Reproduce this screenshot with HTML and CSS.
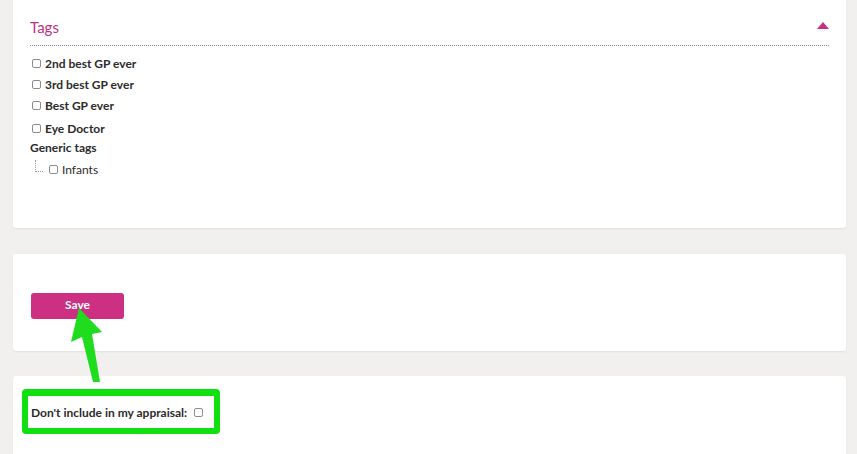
FILE: index.html
```html
<!DOCTYPE html>
<html>
<head>
<meta charset="utf-8">
<link rel="stylesheet" href="styles.css">
</head>
<body>
<div class="page">
  <section class="card card-tags">
    <div class="tags-head">
      <h2 class="tags-title">Tags</h2>
      <span class="caret"></span>
    </div>
    <ul class="tag-list">
      <li class="tag"><span class="cb"></span>2nd best GP ever</li>
      <li class="tag"><span class="cb"></span>3rd best GP ever</li>
      <li class="tag"><span class="cb"></span>Best GP ever</li>
      <li class="tag tag-last"><span class="cb"></span>Eye Doctor</li>
    </ul>
    <div class="group-title">Generic tags</div>
    <div class="sub-tag"><span class="tree"></span><span class="cb"></span>Infants</div>
  </section>

  <section class="card card-save">
    <button class="btn-save">Save</button>
  </section>

  <section class="card card-appraisal">
    <div class="highlight">
      <span class="label">Don't include in my appraisal:</span><span class="cb"></span>
    </div>
  </section>

  <svg class="arrow" width="60" height="90" viewBox="0 0 60 90">
    <polygon points="19,0 11,34 22,29 33,74 40,74 32,26 42,24" fill="#1fdc1f"/>
  </svg>
</div>
</body>
</html>
```

FILE: styles.css
```css
* { box-sizing: border-box; }
html, body { margin: 0; padding: 0; }
body {
  background: #f1f0ee;
  font-family: Lato, "Open Sans", Arial, sans-serif;
  color: #2b2b2b;
  width: 857px;
  height: 454px;
  overflow: hidden;
}
.page {
  position: relative;
  padding: 0 11px 0 13px;
}
.card {
  background: #fff;
  border-radius: 3px;
  box-shadow: 0 1px 2px rgba(0,0,0,0.07);
}
.card-tags {
  margin-top: -6px;
  height: 234px;
  padding: 0 17px;
}
.tags-head {
  display: flex;
  justify-content: space-between;
  align-items: center;
  padding-top: 24px;
  padding-bottom: 9px;
  border-bottom: 1px dotted #8a8a8a;
}
.tags-title {
  margin: 0;
  font-size: 15px;
  line-height: 18px;
  font-weight: 400;
  color: #c2307f;
}
.caret {
  width: 0; height: 0;
  border-left: 6px solid transparent;
  border-right: 6px solid transparent;
  border-bottom: 7px solid #c92f84;
  margin-top: -3px;
}
.tag-list {
  list-style: none;
  margin: 7px 0 0 0;
  padding: 0;
}
.tag {
  display: flex;
  align-items: center;
  height: 21px;
  font-size: 12px;
  font-weight: 700;
  padding-left: 2px;
}
.tag-last { height: 23px; padding-top: 2px; }
.cb {
  display: inline-block;
  flex: none;
  width: 9px;
  height: 9px;
  border: 1px solid #8c8c8c;
  border-radius: 2px;
  margin-right: 4px;
  background: #fff;
}
.group-title {
  font-size: 12px;
  font-weight: 700;
  line-height: 16px;
  margin-top: 1px;
}
.sub-tag {
  display: flex;
  align-items: center;
  height: 20px;
  margin-top: 3px;
  font-size: 12px;
  padding-left: 5px;
}
.tree {
  width: 8px;
  height: 12px;
  border-left: 1px dotted #999;
  border-bottom: 1px dotted #999;
  margin-right: 6px;
  margin-top: -6px;
}
.card-save {
  margin-top: 26px;
  height: 97px;
  padding: 39px 17px 0;
}
.btn-save {
  display: block;
  margin-left: 1px;
  width: 93px;
  height: 26px;
  border: none;
  border-radius: 3px;
  background: #cd2f82;
  color: #fff;
  font-family: Lato, "Open Sans", Arial, sans-serif;
  font-weight: 700;
  font-size: 12px;
  padding: 0 0 4px;
}
.card-appraisal {
  margin-top: 25px;
  height: 100px;
  padding: 13px 9px 0;
}
.highlight {
  display: inline-flex;
  align-items: center;
  width: 198px;
  height: 45px;
  border: 6px solid #10e010;
  border-width: 7px 6px 6px 6px;
  border-radius: 4px;
  padding-left: 3px;
  font-size: 12px;
  font-weight: 700;
}
.highlight .label { margin-right: 7px; white-space: nowrap; }
.highlight .cb { margin: 0; }
.arrow {
  position: absolute;
  left: 60px;
  top: 314px;
}
```
